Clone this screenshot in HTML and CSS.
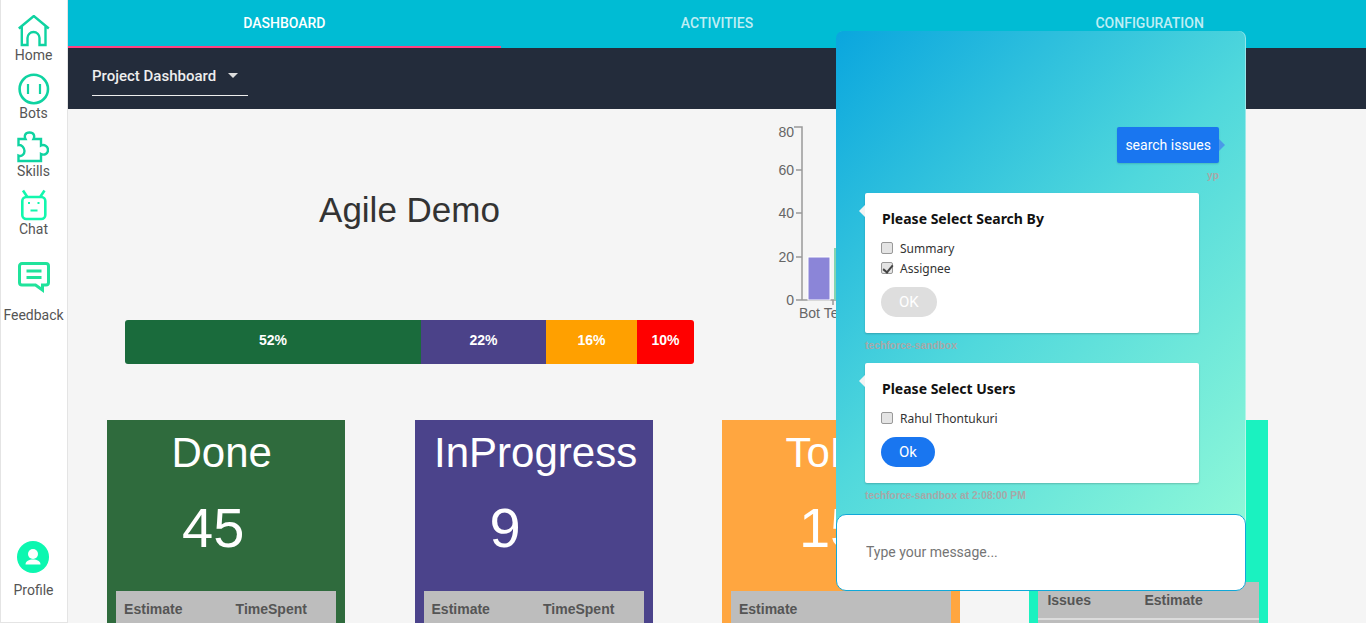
FILE: index.html
```html
<!DOCTYPE html>
<html>
<head>
    <meta charset="UTF-8">
    <title>Agile Demo</title>
    <link rel="stylesheet" href="styles.css">
</head>
<body>
    <nav class="sidebar">
        <a class="navItem">
            <svg class="navIcon" viewBox="0 0 32 32"><path d="M.8 13.500 15.800 1 30.800 13.500M3.800 11V30H9.500V23a6 6 0 0 1 12 0V30H27.500V11" fill="none" stroke="#0fd3a1" stroke-width="2.400"/></svg>
            <span>Home</span>
        </a>
        <a class="navItem">
            <svg class="navIcon" viewBox="0 0 32 32"><circle cx="15.800" cy="16" r="14.200" fill="none" stroke="#0fd3a1" stroke-width="2.600"/><path d="M10 11V21M22 11V21" stroke="#0fd3a1" stroke-width="2.200"/></svg>
            <span>Bots</span>
        </a>
        <a class="navItem">
            <svg class="navIcon" viewBox="0 0 32 32"><path d="M1.500 8H8.500C7 5 8 1.500 12.500 1.500S18 5 16.500 8H24V14.500C27 13 31 15 31 19S27 24.500 24 23V30H1.500V24.500C5 26 7.500 23 7.500 20S5 13.500 1.500 14Z" fill="none" stroke="#0fd3a1" stroke-width="2.400"/></svg>
            <span>Skills</span>
        </a>
        <a class="navItem">
            <svg class="navIcon" viewBox="0 0 32 32"><path d="M5 1.500 9 7.500M26.500 1.500 22.500 7.500" stroke="#12f7ad" stroke-width="2.600"/><rect x="4.300" y="8" width="23" height="22" rx="4" fill="none" stroke="#12f7ad" stroke-width="2.600"/><path d="M10 14H12M19.500 14H21.500M12.500 21.500H19.500" stroke="#12f7ad" stroke-width="2"/></svg>
            <span>Chat</span>
        </a>
        <a class="navItem feedback">
            <svg class="navIcon" viewBox="0 0 32 32"><path d="M4 1.500H28A2.500 2.500 0 0 1 30.500 4V20.500A2.500 2.500 0 0 1 28 23H24.500V28L17.500 23H4A2.500 2.500 0 0 1 1.500 20.500V4A2.500 2.500 0 0 1 4 1.500Z" fill="none" stroke="#20e39b" stroke-width="3"/><path d="M8.500 9H23.500M8.500 15.500H23.500" stroke="#20e39b" stroke-width="3"/></svg>
            <span>Feedback</span>
        </a>
        <a class="navItem profile">
            <svg class="navIcon" viewBox="0 0 32 32"><circle cx="16" cy="16" r="16" fill="#0cf7b0"/><circle cx="16" cy="13" r="5" fill="#fff"/><path d="M8.500 23.500C8.500 20 12 18.500 16 18.500S23.500 20 23.500 23.500Z" fill="#fff"/></svg>
            <span>Profile</span>
        </a>
    </nav>

    <div class="main">
        <div class="tabs">
            <a class="tab active">DASHBOARD</a>
            <a class="tab">ACTIVITIES</a>
            <a class="tab">CONFIGURATION</a>
        </div>
        <div class="subBar">
            <div class="projectSelect">
                <span>Project Dashboard</span>
                <i class="caret"></i>
            </div>
        </div>
        <div class="content">
            <div class="topRow">
                <div class="summary">
                    <h1 class="projectTitle">Agile Demo</h1>
                    <div class="progress">
                        <div class="seg segDone" style="width: 52%">52%</div>
                        <div class="seg segProgress" style="width: 22%">22%</div>
                        <div class="seg segTodo" style="width: 16%">16%</div>
                        <div class="seg segRed" style="width: 10%">10%</div>
                    </div>
                </div>
                <svg class="chart" width="120" height="200" viewBox="0 0 120 200">
                    <path d="M27 18H35V191M29 61H35M29 104H35M29 148H35M29 191H100M66 191V196" fill="none" stroke="#999" stroke-width="1.500"/>
                    <rect x="41" y="148" width="22" height="43" fill="#8b85d8" stroke="#fff" stroke-width="1"/>
                    <rect x="67" y="139" width="12" height="52" fill="#84d4b0"/>
                    <text class="chartText" x="27" y="28" text-anchor="end">80</text>
                    <text class="chartText" x="27" y="66" text-anchor="end">60</text>
                    <text class="chartText" x="27" y="109" text-anchor="end">40</text>
                    <text class="chartText" x="27" y="153" text-anchor="end">20</text>
                    <text class="chartText" x="27" y="196" text-anchor="end">0</text>
                    <text class="chartText" x="32" y="209">Bot Te</text>
                </svg>
            </div>
            <div class="cards">
                <div class="card cardDone">
                    <div class="cardTitle">Done</div>
                    <div class="cardCount">45</div>
                    <div class="cardTable"><span>Estimate</span><span>TimeSpent</span></div>
                </div>
                <div class="card cardProgress">
                    <div class="cardTitle">InProgress</div>
                    <div class="cardCount">9</div>
                    <div class="cardTable"><span>Estimate</span><span>TimeSpent</span></div>
                </div>
                <div class="card cardTodo">
                    <div class="cardTitle">ToDo</div>
                    <div class="cardCount">15</div>
                    <div class="cardTable"><span>Estimate</span></div>
                </div>
                <div class="card cardBots">
                    <div class="cardTable lastTable"><span>Issues</span><span>Estimate</span></div>
                </div>
            </div>
        </div>
    </div>

    <div class="chatBox">
        <div class="chatLog">
            <div class="userRow">
                <div class="userBubble">search issues</div>
                <div class="msgMeta">yp</div>
            </div>
            <div class="botCard">
                <h4>Please Select Search By</h4>
                <label class="option"><input type="checkbox"> Summary</label>
                <label class="option"><input type="checkbox" checked> Assignee</label>
                <button class="okBtn disabled">OK</button>
            </div>
            <div class="msgMeta">techforce-sandbox</div>
            <div class="botCard">
                <h4>Please Select Users</h4>
                <label class="option"><input type="checkbox"> Rahul Thontukuri</label>
                <button class="okBtn">Ok</button>
            </div>
            <div class="msgMeta">techforce-sandbox at 2:08:00 PM</div>
        </div>
        <div class="chatInput">
            <input type="text" placeholder="Type your message...">
        </div>
    </div>
</body>
</html>
```

FILE: styles.css
```css
* {
    box-sizing: border-box;
}

html, body {
    height: 100%;
}

body {
    margin: 0;
    display: flex;
    overflow: hidden;
    font-family: Roboto, sans-serif;
    background-color: #f5f5f5;
}

.sidebar {
    width: 68px;
    height: 623px;
    flex-shrink: 0;
    display: flex;
    flex-direction: column;
    align-items: center;
    padding: 15px 1px 23px 0;
    background-color: white;
    border-left: 1px solid #e4e4e4;
    border-right: 1px solid #e4e4e4;
    border-bottom: 1px solid #e4e4e4;
}

.navItem {
    display: flex;
    flex-direction: column;
    align-items: center;
    height: 58px;
    font-size: 14px;
    line-height: 17px;
    color: #555;
}

.navIcon {
    flex: none;
    width: 32px;
    height: 32px;
}

.feedback {
    height: 62px;
    margin-top: 15px;
}

.feedback .navIcon {
    margin-bottom: 13px;
}

.profile {
    margin-top: auto;
}

.profile .navIcon {
    margin-bottom: 9px;
}

.main {
    flex: 1;
    min-width: 0;
}

.tabs {
    display: flex;
    height: 48px;
    background-color: #00bcd4;
}

.tab {
    flex: 1;
    text-align: center;
    font-size: 14px;
    font-weight: 500;
    line-height: 46px;
    color: rgba(255,255,255,0.75);
}

.tab.active {
    color: white;
    border-bottom: 2px solid #ff4081;
}

.subBar {
    height: 61px;
    padding: 10px 24px 0;
    background-color: #232c3b;
}

.projectSelect {
    display: flex;
    align-items: center;
    width: 156px;
    height: 38px;
    padding-bottom: 2px;
    font-size: 15px;
    font-weight: 500;
    color: #eee;
    border-bottom: 1px solid #eee;
}

.caret {
    margin-left: 12px;
    border-left: 5px solid transparent;
    border-right: 5px solid transparent;
    border-top: 5px solid #ddd;
}

.content {
    height: 514px;
    overflow: hidden;
}

.topRow {
    display: flex;
    height: 311px;
}

.summary {
    width: 626px;
    padding-left: 57px;
}

.projectTitle {
    margin: 0;
    padding-top: 81px;
    height: 211px;
    text-align: center;
    font-family: "Liberation Sans", sans-serif;
    font-size: 35px;
    font-weight: 400;
    line-height: 40px;
    color: #333;
}

.progress {
    display: flex;
    width: 569px;
    height: 44px;
    border-radius: 3px;
    overflow: hidden;
}

.seg {
    text-align: center;
    font-family: "Liberation Sans", sans-serif;
    font-size: 14px;
    font-weight: 700;
    line-height: 40px;
    color: white;
}

.segDone { background-color: #1a6b3c; }
.segProgress { background-color: #4b4289; }
.segTodo { background-color: #ffa000; }
.segRed { background-color: #ff0000; }

.chart {
    margin-left: 73px;
    overflow: visible;
}

.chartText {
    font-family: "Liberation Sans", sans-serif;
    font-size: 14px;
    fill: #666;
}

.cards {
    display: flex;
    gap: 69.25px;
    padding-left: 39.1px;
}

.card {
    width: 238.2px;
    height: 203px;
    padding: 0 9px;
    color: white;
    font-family: "Liberation Sans", sans-serif;
}

.cardDone { background-color: #2f6b3d; }
.cardProgress { background-color: #4b438b; }
.cardTodo { background-color: #ffa640; }
.cardBots { background-color: #1af2c0; }

.cardTitle {
    height: 66px;
    padding: 9px 9px 0 0;
    text-align: center;
    font-size: 42px;
    line-height: 48px;
}

.cardProgress .cardTitle {
    padding: 9px 0 0 4px;
}

.cardTodo .cardTitle {
    padding-right: 13px;
}

.cardCount {
    height: 105px;
    padding: 10px 0 0 66px;
    font-size: 56px;
    line-height: 64px;
}

.cardTodo .cardCount {
    padding-left: 68px;
}

.cardTable {
    display: flex;
    height: 32px;
    padding: 10px 8px;
    font-size: 14px;
    font-weight: 700;
    color: #555;
    background-color: #bdbdbd;
}

.cardTable span {
    flex: none;
    width: 111.5px;
}

.lastTable {
    height: 38px;
    margin-top: 162px;
    padding-left: 9px;
    border-bottom: 2px solid #dcdcdc;
    box-shadow: 0 3px 0 #bdbdbd;
}

.lastTable span {
    width: 97px;
}

.chatBox {
    position: absolute;
    left: 836px;
    top: 31px;
    width: 410px;
    height: 560px;
    display: flex;
    flex-direction: column;
}

.chatLog {
    height: 493px;
    margin-bottom: -10px;
    padding: 96px 27px 0 29px;
    border-radius: 7px 7px 0 0;
    box-shadow: inset -1px 0 0 rgba(255,255,255,0.4);
    background: linear-gradient(135deg, #0aa6de 0%, #50d8dc 50%, #8ef8d8 100%);
    font-family: "Liberation Sans", sans-serif;
}

.userRow {
    display: flex;
    flex-direction: column;
    align-items: flex-end;
}

.userBubble {
    position: relative;
    height: 36px;
    padding: 0 8px;
    font-family: Roboto, sans-serif;
    font-size: 14px;
    line-height: 36px;
    color: white;
    background-color: #1976f0;
    border-radius: 2px;
    box-shadow: 0 1px 2px rgba(0,0,0,0.15);
}

.userBubble::after {
    content: "";
    position: absolute;
    left: 100%;
    top: 12px;
    border-left: 6px solid #4a9ae8;
    border-top: 6px solid transparent;
    border-bottom: 6px solid transparent;
}

.msgMeta {
    height: 30px;
    font-size: 10.3px;
    font-weight: 700;
    line-height: 26px;
    color: #a8a8a8;
}

.botCard {
    position: relative;
    width: 334px;
    padding: 16px 16px 16px;
    background-color: white;
    border-radius: 2px;
    box-shadow: 0 1px 2px rgba(0,0,0,0.2);
    font-family: "Noto Sans", sans-serif;
}

.botCard::before {
    content: "";
    position: absolute;
    right: 100%;
    top: 12px;
    border-right: 6px solid #f2f4f4;
    border-top: 6px solid transparent;
    border-bottom: 6px solid transparent;
}

.botCard h4 {
    margin: 0 0 10px 1px;
    font-size: 14px;
    font-weight: 700;
    line-height: 19px;
    color: #111;
}

.option {
    display: flex;
    align-items: center;
    height: 20px;
    font-size: 12px;
    color: #333;
}

.option input {
    appearance: none;
    position: relative;
    width: 12px;
    height: 12px;
    margin: 0 7px 0 0;
    background-color: #e4e4e4;
    border: 1px solid #999;
    border-radius: 2px;
}

.option input:checked::after {
    content: "";
    position: absolute;
    left: 3px;
    top: 0;
    width: 4px;
    height: 8px;
    border-right: 2px solid #444;
    border-bottom: 2px solid #444;
    transform: rotate(40deg);
}

.okBtn {
    display: block;
    height: 30px;
    margin-top: 9px;
    padding: 0 18px;
    font-family: Roboto, sans-serif;
    font-size: 15px;
    color: white;
    border: none;
    border-radius: 15px;
    background-color: #1976f0;
}

.okBtn.disabled {
    background-color: #dedede;
}

.chatInput {
    position: relative;
    height: 77px;
    padding: 0 29px 2px;
    display: flex;
    align-items: center;
    background-color: white;
    border: 1px solid #10a8d8;
    border-radius: 10px;
}

.chatInput input {
    flex: 1;
    padding: 0;
    border: none;
    outline: none;
    font-family: Roboto, sans-serif;
    font-size: 14px;
    background: none;
}
```
